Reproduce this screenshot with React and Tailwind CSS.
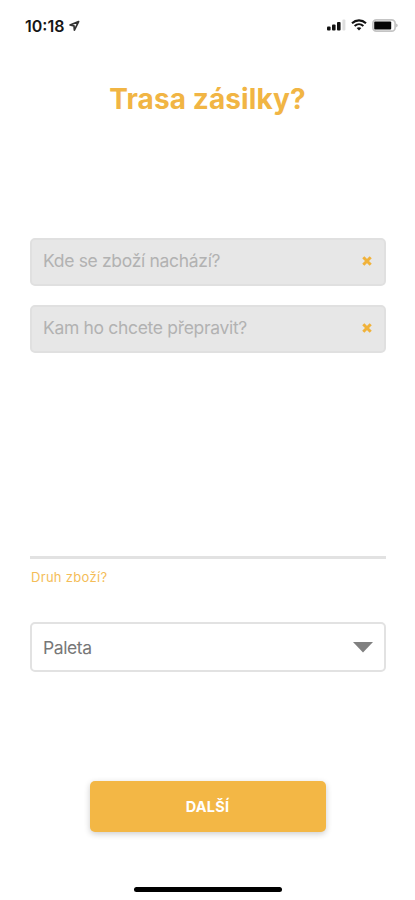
import React, { useState } from "react";

const StatusBar = () => (
  <div className="flex h-[50px] items-center justify-between pl-[25px] pr-[17px]">
    <div className="flex items-center gap-1 pt-0.5">
      <span className="text-[16px] font-semibold leading-5 text-[#161616]">
        10:18
      </span>
      <svg className="mb-px" width="12" height="12" viewBox="0 0 12 12" fill="none">
        <path
          d="M10.6 1.6L2 5L6 5.8L6.4 10.2Z"
          stroke="#333"
          strokeWidth="1.7"
          strokeLinejoin="round"
        />
      </svg>
    </div>

    <div className="flex items-center gap-[5px]">
      <svg width="19" height="12" viewBox="0 0 19 12">
        <rect x="0" y="7.5" width="3.6" height="4" rx="1" fill="#111" />
        <rect x="5" y="5.5" width="3.6" height="6" rx="1" fill="#111" />
        <rect x="10" y="3" width="3.6" height="8.5" rx="1" fill="#111" />
        <rect x="15.4" y="0.5" width="3" height="11" rx="1" fill="#dedede" />
      </svg>
      <svg width="16" height="12" viewBox="0 0 16 12" fill="none">
        <path d="M1 4.2C5 0.4 11 0.4 15 4.2" stroke="#111" strokeWidth="2.1" />
        <path d="M3.6 7C6.2 4.5 9.8 4.5 12.4 7" stroke="#111" strokeWidth="1.9" />
        <path d="M5.6 9.1C7 7.8 9 7.8 10.4 9.1L8 11.5Z" fill="#111" />
      </svg>
      <svg width="26" height="13" viewBox="0 0 26 13">
        <rect
          x="0.9"
          y="0.9"
          width="22.2"
          height="11.2"
          rx="3.4"
          fill="white"
          stroke="#c4c4c4"
          strokeWidth="1.7"
        />
        <rect x="2.2" y="2.6" width="17" height="7.8" rx="1" fill="#050505" />
        <path d="M24.3 4.6C26 5.2 26 7.8 24.3 8.4Z" fill="#aaa" />
      </svg>
    </div>
  </div>
);

const AddressInput = ({ placeholder }) => {
  const [value, setValue] = useState("");

  return (
    <div className="flex h-12 items-center rounded-[5px] border-2 border-[#e0e0e0] bg-[#e7e7e7] pl-[11px] pr-[12px]">
      <input
        value={value}
        onChange={(e) => setValue(e.target.value)}
        placeholder={placeholder}
        className="min-w-0 flex-1 bg-transparent pb-px text-[17.5px] tracking-[-0.32px] text-[#777] outline-none placeholder:text-[#b2b2b2]"
      />
      <button
        onClick={() => setValue("")}
        aria-label="Smazat"
        className="pb-[3px]"
      >
        <svg className="block" width="10" height="10" viewBox="0 0 10 10" fill="none">
          <path d="M1.3 1.3L8.7 8.7M8.7 1.3L1.3 8.7" stroke="#f0b23a" strokeWidth="3" />
        </svg>
      </button>
    </div>
  );
};

const App = () => {
  return (
    <div className="flex h-[900px] w-[415px] flex-col bg-white font-['Inter','Liberation_Sans',sans-serif]">
      <StatusBar />

      <h1 className="mt-[31px] text-center text-[28px] font-bold leading-9 tracking-[0.1px] text-[#f1b544]">
        Trasa zásilky?
      </h1>

      <div className="mt-[121px] flex flex-col gap-[19px] pl-[30px] pr-[29px]">
        <AddressInput placeholder="Kde se zboží nachází?" />
        <AddressInput placeholder="Kam ho chcete přepravit?" />
      </div>

      <div className="mt-[203px] pl-[30px] pr-[29px]">
        <div className="h-[3px] bg-[#e2e2e2]" />
        <p className="mt-[9px] pl-px text-[13px] leading-[18px] tracking-[0.3px] text-[#f4bd58]">
          Druh zboží?
        </p>
        <button className="mt-9 flex h-[50px] w-full items-center justify-between rounded-[5px] border-2 border-[#e2e2e2] bg-white pl-[11px] pr-[11px]">
          <span className="pt-0.5 text-[17.5px] tracking-[-0.4px] text-[#777]">Paleta</span>
          <svg width="20" height="11" viewBox="0 0 20 11">
            <path d="M0 0H20L10 10.5Z" fill="#808080" />
          </svg>
        </button>
      </div>

      <button className="mx-auto mt-[109px] h-[51px] w-[236px] rounded-[5px] bg-[#f3b745] text-[14.5px] font-bold tracking-[0.2px] text-white shadow-[0_2px_6px_rgba(0,0,0,0.2)]">
        DALŠÍ
      </button>

      <div className="mx-auto mt-[55px] h-[5px] w-[148px] rounded-full bg-black" />
    </div>
  );
};

export default App;
